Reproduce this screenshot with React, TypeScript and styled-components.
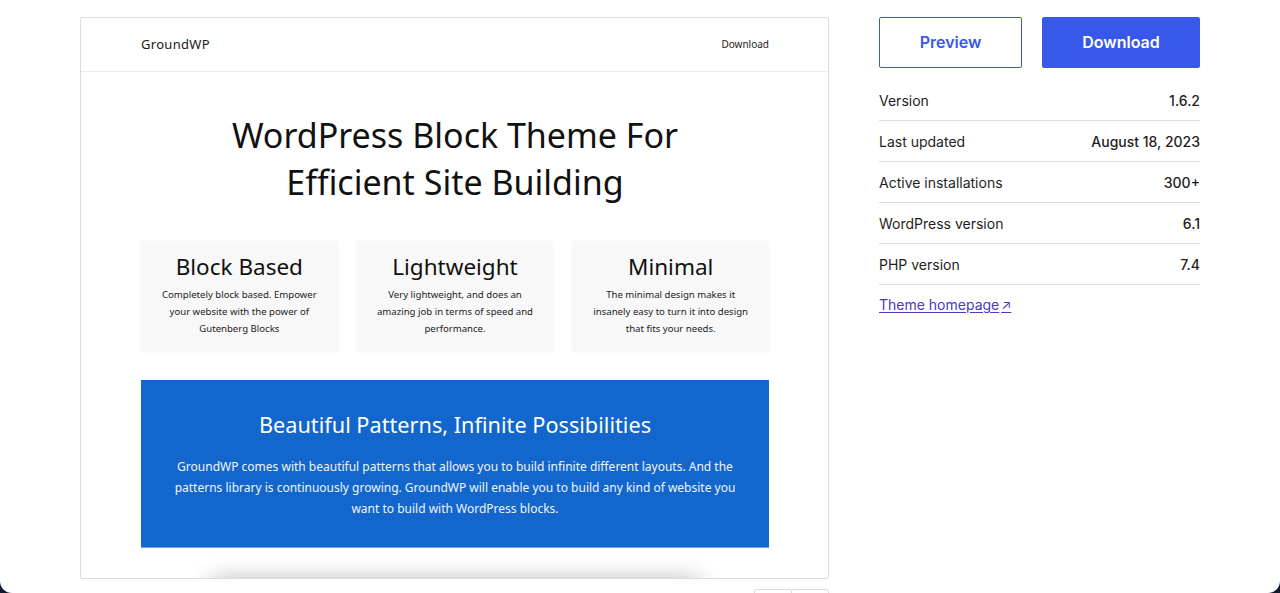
import styled, { createGlobalStyle } from 'styled-components';

const GlobalStyle = createGlobalStyle`
  html, body {
    margin: 0;
    padding: 0;
    background: #0d1b2a;
  }
  body {
    font-family: Inter, "Liberation Sans", sans-serif;
  }
`;

const meta = [
  { label: 'Version', value: '1.6.2' },
  { label: 'Last updated', value: 'August 18, 2023' },
  { label: 'Active installations', value: '300+' },
  { label: 'WordPress version', value: '6.1' },
  { label: 'PHP version', value: '7.4' },
];

const features = [
  {
    title: 'Block Based',
    text: 'Completely block based. Empower your website with the power of Gutenberg Blocks',
  },
  {
    title: 'Lightweight',
    text: 'Very lightweight, and does an amazing job in terms of speed and performance.',
  },
  {
    title: 'Minimal',
    text: 'The minimal design makes it insanely easy to turn it into design that fits your needs.',
  },
];

function App() {
  return (
    <>
      <GlobalStyle />
      <Page>
        <Left>
          <Frame>
            <SiteHeader>
              <SiteName>GroundWP</SiteName>
              <SiteNav>Download</SiteNav>
            </SiteHeader>
            <SiteBody>
              <Hero>
                WordPress Block Theme For
                <br />
                Efficient Site Building
              </Hero>
              <Cards>
                {features.map((f) => (
                  <Card key={f.title}>
                    <CardTitle>{f.title}</CardTitle>
                    <CardText>{f.text}</CardText>
                  </Card>
                ))}
              </Cards>
              <Banner>
                <BannerTitle>Beautiful Patterns, Infinite Possibilities</BannerTitle>
                <BannerText>
                  GroundWP comes with beautiful patterns that allows you to build infinite different layouts. And the
                  patterns library is continuously growing. GroundWP will enable you to build any kind of website you
                  want to build with WordPress blocks.
                </BannerText>
              </Banner>
              <NextBlock />
            </SiteBody>
          </Frame>
          <Pager>
            <PagerButton />
            <PagerButton />
          </Pager>
        </Left>
        <Sidebar>
          <Actions>
            <ActionButton variant='outline'>Preview</ActionButton>
            <ActionButton variant='solid'>Download</ActionButton>
          </Actions>
          <MetaList>
            {meta.map((m) => (
              <MetaRow key={m.label}>
                <MetaLabel>{m.label}</MetaLabel>
                <MetaValue>{m.value}</MetaValue>
              </MetaRow>
            ))}
          </MetaList>
          <HomeLink href='#'>
            Theme homepage
            <Arrow>↗</Arrow>
          </HomeLink>
        </Sidebar>
      </Page>
    </>
  );
}

const Page = styled.div`
  box-sizing: border-box;
  height: 593px;
  overflow: hidden;
  background: #fff;
  border-radius: 0 0 12px 12px;
  display: flex;
  gap: 50px;
  padding: 17px 0 0 80px;
`;

const Left = styled.div`
  width: 749px;
  display: flex;
  flex-direction: column;
`;

const Frame = styled.div`
  box-sizing: border-box;
  height: 562px;
  flex-shrink: 0;
  border: 1px solid #dcdcde;
  border-radius: 2px;
  overflow: hidden;
  font-family: 'Noto Sans', 'Open Sans', sans-serif;
  color: #111;
`;

const SiteHeader = styled.div`
  height: 53px;
  border-bottom: 1px solid #ececec;
  display: flex;
  align-items: center;
  justify-content: space-between;
  padding: 0 59px 0 60px;
`;

const SiteName = styled.div`
  font-size: 13px;
  letter-spacing: 0.3px;
  color: #1a1a1a;
  margin-top: -1px;
`;

const SiteNav = styled.div`
  font-size: 10px;
  color: #222;
  margin-top: -2px;
`;

const SiteBody = styled.div`
  padding: 0 59px 0 60px;
  display: flex;
  flex-direction: column;
`;

const Hero = styled.h1`
  margin: 40px 0 0;
  font-weight: 400;
  font-size: 34px;
  line-height: 47px;
  text-align: center;
  color: #111;
`;

const Cards = styled.div`
  margin-top: 35px;
  display: grid;
  grid-template-columns: repeat(3, 1fr);
  gap: 19px;
`;

const Card = styled.div`
  height: 111px;
  box-sizing: border-box;
  background: #f8f8f8;
  box-shadow: 0 0 3px rgba(0, 0, 0, 0.04);
  padding: 11px 18px 0;
  text-align: center;
`;

const CardTitle = styled.div`
  font-size: 22.5px;
  line-height: 30px;
  color: #111;
`;

const CardText = styled.div`
  margin-top: 4px;
  font-size: 9.6px;
  line-height: 17px;
  color: #222;
`;

const Banner = styled.div`
  margin-top: 28px;
  height: 168px;
  box-sizing: border-box;
  background: #1266cc;
  border-bottom: 1px solid #7c9ee6;
  color: #fff;
  text-align: center;
  padding: 30px 26px 0;
`;

const BannerTitle = styled.div`
  font-size: 21.7px;
  line-height: 30px;
`;

const BannerText = styled.div`
  margin-top: 16px;
  font-size: 12px;
  line-height: 21px;
  color: #f1f5fc;
`;

const NextBlock = styled.div`
  margin: 33px 70px 0;
  height: 60px;
  background: #fff;
  box-shadow: 0 -2px 24px rgba(0, 0, 0, 0.28);
`;

const Pager = styled.div`
  margin-top: 10px;
  align-self: flex-end;
  display: flex;
`;

const PagerButton = styled.div`
  width: 38px;
  height: 30px;
  box-sizing: border-box;
  border: 1px solid #dcdcde;
  border-radius: 2px;
  & + & {
    margin-left: -1px;
  }
`;

const Sidebar = styled.div`
  width: 321px;
  display: flex;
  flex-direction: column;
`;

const Actions = styled.div`
  display: flex;
  gap: 20px;
`;

const ActionButton = styled.div<{ variant: 'outline' | 'solid' }>`
  height: 51px;
  box-sizing: border-box;
  display: flex;
  align-items: center;
  justify-content: center;
  font-size: 16px;
  font-weight: 600;
  border-radius: 2px;
  border: 1px solid #3858e9;
  padding-bottom: 2px;
  ${({ variant }) =>
    variant === 'outline'
      ? `
    width: 143px;
    background: #fff;
    color: #3858e9;
  `
      : `
    flex: 1;
    background: #3858e9;
    color: #fff;
  `}
`;

const MetaList = styled.div`
  margin-top: 12px;
`;

const MetaRow = styled.div`
  height: 41px;
  box-sizing: border-box;
  display: flex;
  align-items: center;
  justify-content: space-between;
  border-bottom: 1px solid #dcdcde;
  font-size: 14px;
  color: #1e1e1e;
`;

const MetaLabel = styled.span``;

const MetaValue = styled.span`
  font-weight: 500;
`;

const HomeLink = styled.a`
  margin-top: 11px;
  font-size: 14px;
  color: #4b3ac0;
  text-decoration: underline;
  text-underline-offset: 2px;
  display: flex;
  align-items: center;
  gap: 2px;
`;

const Arrow = styled.span`
  font-size: 13px;
  text-decoration: none;
  display: inline-block;
`;

export default App;
